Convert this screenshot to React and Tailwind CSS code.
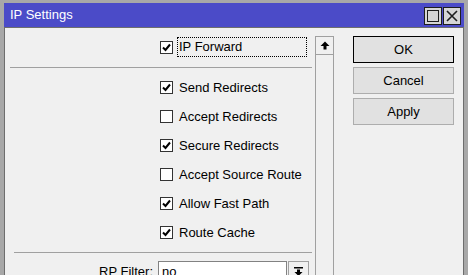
import React from "react";

const ROWS = [
  { label: "Send Redirects", checked: true },
  { label: "Accept Redirects", checked: false },
  { label: "Secure Redirects", checked: true },
  { label: "Accept Source Route", checked: false },
  { label: "Allow Fast Path", checked: true },
  { label: "Route Cache", checked: true },
];

function CheckBox({ checked }) {
  return (
    <span className="flex h-[13px] w-[13px] shrink-0 items-center justify-center border border-[#333333] bg-white">
      {checked && (
        <svg width="11" height="11" viewBox="0 0 11 11">
          <path d="M2 5.5 L4.5 8 L9 2.5" fill="none" stroke="#000" strokeWidth="2" />
        </svg>
      )}
    </span>
  );
}

function CheckRow({ label, checked }) {
  return (
    <div className="flex h-[29px] items-center pl-[155px]">
      <CheckBox checked={checked} />
      <span className="ml-[6px] text-[13px] text-black">{label}</span>
    </div>
  );
}

function Button({ children, primary }) {
  return (
    <div
      className={
        "flex h-[27px] items-center justify-center bg-[#e1e1e1] text-[13px] text-black border " +
        (primary ? "border-black" : "border-[#adadad]")
      }
    >
      {children}
    </div>
  );
}

export default function App() {
  return (
    <div className="h-[275px] w-[468px] overflow-hidden bg-[#a8a8a8] pl-[4px] pr-[4px] pt-[3px] font-['Liberation_Sans',Arial,sans-serif]">
      {/* Title bar */}
      <div className="flex h-[24px] items-center bg-[#4b4bc8] pl-[6px] pr-[3px]">
        <span className="text-[13px] text-white">IP Settings</span>
        <div className="ml-auto flex gap-[1px] pt-[2px]">
          <div className="flex h-[18px] w-[18px] items-center justify-center border border-[#1e1e1e] bg-[#d6d6d6]">
            <div className="h-[12px] w-[12px] border border-[#1e1e1e]" />
          </div>
          <div className="flex h-[18px] w-[18px] items-center justify-center border border-[#1e1e1e] bg-[#d6d6d6]">
            <svg width="12" height="12" viewBox="0 0 12 12">
              <path d="M1 1 L11 11 M11 1 L1 11" stroke="#1e1e1e" strokeWidth="1.6" />
            </svg>
          </div>
        </div>
      </div>

      {/* Body */}
      <div className="flex h-[260px] border-l border-r border-t border-[#6e6e6e] bg-[#f0f0f0]">
        {/* Left panel */}
        <div className="flex w-[329px]">
          <div className="w-[310px] pt-[9px]">
            <div className="flex h-[20px] items-center pl-[155px]">
              <CheckBox checked />
              <div className="ml-[4px] flex h-[20px] w-[130px] items-center border border-dotted border-black pl-[1px] text-[13px] text-black">
                IP Forward
              </div>
            </div>
            <div className="ml-[5px] mr-[2px] mt-[10px] h-px bg-[#a0a0a0]" />
            <div className="mt-[5px]">
              {ROWS.map((r) => (
                <CheckRow key={r.label} label={r.label} checked={r.checked} />
              ))}
            </div>
            <div className="ml-[9px] mr-[2px] mt-[5px] h-px bg-[#a0a0a0]" />
            <div className="mt-[8px] flex h-[21px] items-center">
              <span className="w-[148px] text-right text-[13px] text-black">RP Filter:</span>
              <div className="ml-[5px] flex h-[21px] w-[129px] items-center border border-[#828282] bg-white pl-[3px] text-[13px] text-black">
                no
              </div>
              <div className="ml-[1px] flex h-[21px] w-[21px] items-center justify-center border border-[#a0a0a0] bg-[#f0f0f0]">
                <svg width="11" height="11" viewBox="0 0 11 11">
                  <rect x="1" y="1" width="9" height="1.5" fill="#000" />
                  <path d="M4 3.5 H7 V6 H9.5 L5.5 10 L1.5 6 H4 Z" fill="#000" />
                </svg>
              </div>
            </div>
          </div>

          {/* Scrollbar */}
          <div className="ml-[1px] mt-[8px] w-[19px] border border-[#a0a0a0] bg-[#f0f0f0]">
            <div className="flex h-[18px] items-center justify-center border-b border-[#a0a0a0]">
              <svg width="10" height="9" viewBox="0 0 10 9">
                <path d="M5 0.5 L9.5 5 H6.5 V8.5 H3.5 V5 H0.5 Z" fill="#000" />
              </svg>
            </div>
          </div>
        </div>

        {/* Buttons */}
        <div className="ml-[19px] mt-[8px] flex w-[101px] flex-col gap-[4px]">
          <Button primary>OK</Button>
          <Button>Cancel</Button>
          <Button>Apply</Button>
        </div>
      </div>
    </div>
  );
}
